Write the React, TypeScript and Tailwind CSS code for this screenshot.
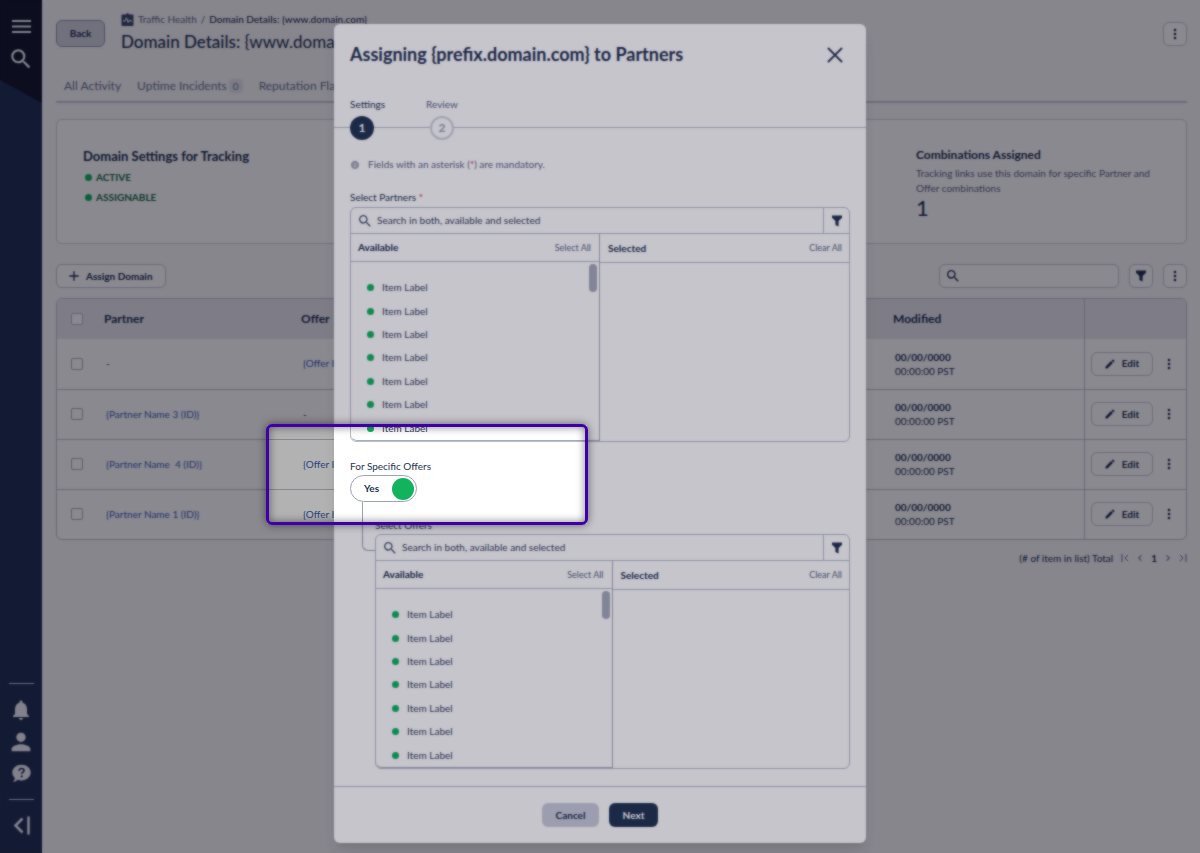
import type { ReactNode } from 'react';
import { MdAdd, MdChevronLeft, MdChevronRight, MdEdit, MdInfo, MdMoreVert, MdNotifications, MdPerson, MdSearch } from 'react-icons/md';

const rows = [
  { id: 1, partner: '', offer: '{Offer ID}' },
  { id: 2, partner: '{Partner Name 3 (ID)}', offer: '' },
  { id: 3, partner: '{Partner Name\u00a0 4 (ID)}', offer: '{Offer ID}' },
  { id: 4, partner: '{Partner Name 1 (ID)}', offer: '{Offer ID}' },
];

const items = [1, 2, 3, 4, 5, 6, 7];

function FilterIcon({ className = 'size-3' }: { className?: string }) {
  return (
    <svg className={className} viewBox="0 0 12 12" fill="currentColor" aria-hidden="true">
      <path d="M1 .5h10v2.200L7.600 6v5.500L4.400 10V6L1 2.700z" />
    </svg>
  );
}

function PulseIcon() {
  return (
    <svg className="size-[13px]" viewBox="0 0 13 13" aria-hidden="true">
      <path d="M1.500 1.500h3L6.500 0l2 1.500h3c.6 0 1 .4 1 1v9.500c0 .6-.4 1-1 1h-10c-.6 0-1-.4-1-1V2.500c0-.6.4-1 1-1z" fill="#3c4a6c" />
      <path d="M2 8h2l1.500-3.200L7.200 9.500l1.300-2.700.7 1.200H11" fill="none" stroke="#fff" strokeWidth="1" />
    </svg>
  );
}

function HelpIcon() {
  return (
    <svg className="size-[19px]" viewBox="0 0 19 19" aria-hidden="true">
      <path d="M9.500.8c5.200 0 9.200 3.500 9.200 7.800s-4 7.800-9.200 7.800c-1.400 0-2.700-.2-3.900-.7-1.300 1.300-3 2.100-4.600 2.100 1-.9 1.700-2.300 1.900-3.800C1.200 12.500.3 10.600.3 8.600.3 4.300 4.300.8 9.500.8z" fill="currentColor" />
      <path d="M7.100 6.700c.1-1.500 1.100-2.200 2.500-2.200s2.400.8 2.400 2c0 1.700-2.300 1.700-2.300 3.500" fill="none" stroke="#233253" strokeWidth="1.700" />
      <circle cx="9.700" cy="12.400" r="1.100" fill="#233253" />
    </svg>
  );
}

function CloseIcon() {
  return (
    <svg className="size-4" viewBox="0 0 16 16" fill="none" stroke="currentColor" strokeWidth="2" strokeLinecap="round" aria-hidden="true">
      <path d="M1.500 1.500l13 13M14.500 1.500l-13 13" />
    </svg>
  );
}

function Sidebar() {
  return (
    <nav className="relative flex w-[42px] shrink-0 flex-col items-center justify-between bg-[#233253] text-[#f2f2f6]">
      <svg className="absolute top-0 left-0 h-[103px] w-full" viewBox="0 0 42 103" preserveAspectRatio="none" aria-hidden="true">
        <path d="M0 0h42v103L0 80z" fill="#14182d" />
      </svg>
      <div className="relative flex flex-col items-center gap-3 pt-5">
        <button type="button" aria-label="Menu">
          <svg className="h-[14px] w-[19px]" viewBox="0 0 19 14" fill="currentColor" aria-hidden="true">
            <path d="M0 0h19v2H0zM0 5.500h19v2H0zM0 11h19v2H0z" />
          </svg>
        </button>
        <button type="button" aria-label="Search">
          <MdSearch className="size-[26px]" />
        </button>
      </div>
      <div className="flex w-[25px] flex-col items-center pb-[18px]">
        <div className="h-px w-full bg-[#c4c9d6]" />
        <button type="button" aria-label="Notifications" className="mt-[14px]">
          <MdNotifications className="size-6" />
        </button>
        <button type="button" aria-label="Account" className="mt-[6px]">
          <MdPerson className="size-7" />
        </button>
        <button type="button" aria-label="Help" className="mt-2">
          <HelpIcon />
        </button>
        <div className="mt-4 h-px w-full bg-[#c4c9d6]" />
        <button type="button" aria-label="Collapse" className="mt-4">
          <svg className="size-[19px]" viewBox="0 0 19 19" fill="none" stroke="currentColor" aria-hidden="true">
            <path d="M10.500 2.500L3.500 9.500l7 7" strokeWidth="2.500" />
            <path d="M16.500 .5v18" strokeWidth="2.500" />
          </svg>
        </button>
      </div>
    </nav>
  );
}

function IconButton({ label, children }: { label: string; children: ReactNode }) {
  return (
    <button type="button" aria-label={label} className="flex size-6 items-center justify-center rounded-md border border-[#c6c8d3] bg-white">
      {children}
    </button>
  );
}

function DomainPage() {
  return (
    <main className="min-w-0 flex-1 pr-[13px] pl-[14px]">
      <header className="flex h-16 items-start justify-between">
        <div className="flex gap-4">
          <button type="button" className="mt-5 h-[27px] w-[49px] rounded-md border border-[#8e96b0] bg-[#d0d2dd] text-[10px] font-bold">
            Back
          </button>
          <div className="pt-3">
            <div className="flex h-[14px] items-center gap-1 text-[10px]">
              <PulseIcon />
              <a href="#health" className="text-[#5c6685]">Traffic Health</a>
              <span className="text-[#5c6685]">/</span>
              <span className="font-medium">Domain Details: {'{www.domain.com}'}</span>
            </div>
            <h1 className="mt-1 text-[17px] leading-6 font-medium">Domain Details: <span className="font-normal">{'{www.domain.com}'}</span></h1>
          </div>
        </div>
        <div className="pt-[22px]">
          <IconButton label="More"><MdMoreVert className="size-4" /></IconButton>
        </div>
      </header>

      <div className="flex h-[39px] items-center gap-4 border-b-2 border-[#c9cbd8] px-2 pt-[6px] text-[12px] text-[#6b7491]">
        <button type="button">All Activity</button>
        <button type="button" className="flex items-center gap-[2px]">
          Uptime Incidents
          <span className="rounded-sm bg-[#e6e7ee] px-1 text-[10px] leading-[14px]">0</span>
        </button>
        <button type="button">Reputation Flags</button>
      </div>

      <section className="mt-4 flex h-[125px] justify-between rounded-md border border-[#cfd1da] bg-white pl-[26px]">
        <div className="pt-[27px]">
          <h2 className="text-[13px] leading-[18px] font-bold">Domain Settings for Tracking</h2>
          {['ACTIVE', 'ASSIGNABLE'].map((status) => (
            <p key={status} className="mt-1 flex h-4 items-center gap-1 pl-[2px] text-[10px] font-bold text-[#1c6b45]">
              <span className="size-[7px] rounded-full bg-[#12b35d]" />
              {status}
            </p>
          ))}
        </div>
        <div className="w-[270px] pt-[27px] pr-[30px]">
          <h2 className="text-[12px] leading-4 font-bold">Combinations Assigned</h2>
          <p className="mt-[3px] text-[10px] leading-[15px] text-[#5c6685]">
            Tracking links use this domain for specific Partner and Offer combinations
          </p>
          <p className="text-[22px] leading-6">1</p>
        </div>
      </section>

      <div className="mt-5 flex h-6 items-center justify-between">
        <button type="button" className="flex h-6 w-[110px] items-center gap-1 rounded-md border border-[#c6c8d3] bg-white px-[9px] text-[10px] font-bold whitespace-nowrap">
          <MdAdd className="size-4 shrink-0" />
          Assign Domain
        </button>
        <div className="flex gap-[10px]">
          <label className="flex h-6 w-[180px] items-center rounded-md border border-[#c6c8d3] bg-white px-[5px]">
            <MdSearch className="size-4" />
            <input type="search" aria-label="Search domains" className="min-w-0 flex-1 outline-none" />
          </label>
          <IconButton label="Filter"><FilterIcon /></IconButton>
          <IconButton label="More options"><MdMoreVert className="size-4" /></IconButton>
        </div>
      </div>

      <div className="mt-[10px] overflow-hidden rounded-md border border-[#c0c2ce] bg-white">
        <table className="w-full table-fixed text-left">
          <thead>
            <tr className="h-10 bg-[#e8e9ee] text-[12px]">
              <th className="w-[47px] pl-[14px]"><input type="checkbox" aria-label="Select all" className="block size-3 appearance-none rounded-[2px] border border-[#b5b8c6] bg-white" /></th>
              <th className="w-[197px]">Partner</th>
              <th>Offer</th>
              <th className="w-[191px]">Modified</th>
              <th aria-label="Actions" className="w-[102px] border-l border-[#c0c2ce]" />
            </tr>
          </thead>
          <tbody className="text-[10px]">
            {rows.map((row) => (
              <tr key={row.id} className="h-[50px] border-b border-[#c0c2ce] last:border-b-0">
                <td className="pl-[14px]"><input type="checkbox" aria-label={`Select row ${row.id}`} className="block size-3 appearance-none rounded-[2px] border border-[#a9acba] bg-white" /></td>
                <td className="pl-[2px]">{row.partner ? <a href="#partner" className="text-[#3d62b8]">{row.partner}</a> : '-'}</td>
                <td className="pl-[2px]">{row.offer ? <a href="#offer" className="text-[#3d62b8]">{row.offer}</a> : '-'}</td>
                <td className="pl-[2px] leading-[14px]">
                  <div className="font-bold">00/00/0000</div>
                  <div>00:00:00 PST</div>
                </td>
                <td className="border-l border-[#c0c2ce] pl-[6px]">
                  <div className="flex items-center gap-2">
                    <button type="button" className="flex h-6 w-[62px] items-center justify-center gap-[6px] rounded-md border border-[#c6c8d3] font-bold">
                      <MdEdit className="size-3" />
                      Edit
                    </button>
                    <button type="button" aria-label="Row options"><MdMoreVert className="size-4" /></button>
                  </div>
                </td>
              </tr>
            ))}
          </tbody>
        </table>
      </div>

      <div className="mt-2 flex h-5 items-center justify-end gap-2 text-[10px]">
        <span>(# of item in list) Total</span>
        <div className="flex items-center gap-[5px]">
          <button type="button" aria-label="First page" className="text-[#6b7491]">
            <svg className="size-2" viewBox="0 0 8 8" fill="none" stroke="currentColor" aria-hidden="true"><path d="M1 0v8M7 1L4 4l3 3" /></svg>
          </button>
          <button type="button" aria-label="Previous page" className="text-[#6b7491]"><MdChevronLeft className="size-3" /></button>
          <span className="font-bold">1</span>
          <button type="button" aria-label="Next page" className="text-[#6b7491]"><MdChevronRight className="size-3" /></button>
          <button type="button" aria-label="Last page" className="text-[#6b7491]">
            <svg className="size-2" viewBox="0 0 8 8" fill="none" stroke="currentColor" aria-hidden="true"><path d="M7 0v8M1 1l3 3-3 3" /></svg>
          </button>
        </div>
      </div>
    </main>
  );
}

function TransferList({ label }: { label: string }) {
  return (
    <div className="flex flex-col rounded-md border border-[#b9bccb]">
      <div className="flex h-[26px] items-center border-b border-[#b9bccb]">
        <MdSearch className="ml-[6px] size-4 text-[#4a5674]" />
        <input
          type="text"
          aria-label={label}
          placeholder="Search in both, available and selected"
          className="ml-1 min-w-0 flex-1 text-[10px] outline-none placeholder:text-[#35415f] placeholder:opacity-100"
        />
        <button type="button" aria-label="Filter list" className="flex h-full w-[26px] items-center justify-center border-l border-[#b9bccb]">
          <FilterIcon />
        </button>
      </div>
      <div className="grid grid-cols-2">
        <div className="rounded-bl-md border-r border-b border-[#a9adc1]">
          <div className="flex h-[28px] items-center justify-between border-b border-[#b9bccb] pr-2 pl-[7px] text-[10px]">
            <h3 className="font-bold">Available</h3>
            <button type="button" className="text-[9px] text-[#5c6685]">Select All</button>
          </div>
          <div className="flex justify-between">
            <ul className="mt-[14px] grid h-[164px] grid-rows-7 pl-4 text-[10px] text-[#35415f]">
              {items.map((item) => (
                <li key={item} className="flex items-center gap-2">
                  <span className="size-[7px] rounded-full bg-[#12b35d]" />
                  Item Label
                </li>
              ))}
            </ul>
            <div className="mt-[2px] mr-[2px] h-7 w-2 rounded-full bg-[#a7abbc]" />
          </div>
        </div>
        <div>
          <div className="flex h-[29px] items-center justify-between border-b border-[#b9bccb] pr-[7px] pl-2 text-[10px]">
            <h3 className="font-bold">Selected</h3>
            <button type="button" className="text-[9px] text-[#5c6685]">Clear All</button>
          </div>
        </div>
      </div>
    </div>
  );
}

function AssignModal() {
  return (
    <div role="dialog" aria-label="Assign to partners" className="mt-6 mb-[10px] w-full max-w-[532px] rounded-md bg-white shadow-lg">
      <div className="flex h-[61px] items-center justify-between pr-[23px] pl-4">
        <h2 className="text-[18px] font-bold">Assigning {'{prefix.domain.com}'} to Partners</h2>
        <button type="button" aria-label="Close" className="text-[#35415f]">
          <CloseIcon />
        </button>
      </div>

      <ol className="relative mt-3 flex gap-[41px] px-4 text-[10px]">
        <li className="absolute inset-x-0 bottom-3 h-px bg-[#b9bccb]" aria-hidden="true" />
        <li className="relative flex flex-col gap-[5px]">
          <span className="leading-[14px]">Settings</span>
          <span className="flex size-6 items-center justify-center rounded-full bg-[#223553] text-[12px] font-bold text-white">1</span>
        </li>
        <li className="relative flex flex-col items-center gap-[5px] text-[#5c6685]">
          <span className="leading-[14px]">Review</span>
          <span className="flex size-6 items-center justify-center rounded-full border-2 border-[#d0d2dc] bg-white text-[12px] font-bold text-[#9aa0b5]">2</span>
        </li>
      </ol>

      <div className="px-4">
        <p className="mt-4 flex h-[17px] items-center gap-2 text-[10px] text-[#5c6685]">
          <MdInfo className="size-[10px] text-[#a7abbc]" />
          <span>Fields with an asterisk (<span className="text-[#e5173f]">*</span>) are mandatory.</span>
        </p>
        <div className="mt-[17px]">
          <p className="h-[17px] text-[10px] leading-[14px]">Select Partners <span className="text-[#e5173f]">*</span></p>
          <TransferList label="Select Partners" />
        </div>

        <label className="mt-4 block w-fit text-[10px]">
          <span className="block leading-4">For Specific Offers</span>
          <span className="relative mt-px flex h-[27px] w-[67px] items-center justify-between rounded-full border border-[#9ca3b8] pr-[2px] pl-[13px] font-bold">
            <input type="checkbox" role="switch" defaultChecked className="sr-only" />
            Yes
            <span className="size-[22px] rounded-full bg-[#12b35d]" />
          </span>
        </label>
        <div className="flex">
          <div className="ml-3 h-[49px] w-[13px] shrink-0 rounded-bl-md border-b border-l border-[#9ca3b8]" />
          <div className="min-w-0 flex-1 pt-4">
            <p className="h-4 text-[10px] leading-[14px]">Select Offers</p>
            <TransferList label="Select Offers" />
          </div>
        </div>
      </div>

      <footer className="mt-[17px] flex justify-center gap-[10px] border-t border-[#b9bccb] py-4 text-[10px] font-bold">
        <button type="button" className="h-6 w-[57px] rounded-md bg-[#c9ccda]">Cancel</button>
        <button type="button" className="h-6 w-[49px] rounded-md bg-[#223553] text-white">Next</button>
      </footer>
    </div>
  );
}

export default function App() {
  return (
    <div className="relative flex min-h-screen bg-[#f8f8f9] font-['Lato','Open_Sans',sans-serif] text-[#233253]">
      <Sidebar />
      <DomainPage />
      <div className="absolute inset-0 flex items-start justify-center bg-black/30">
        <AssignModal />
      </div>
      {/* Softens, then dims, everything around the spotlight */}
      <div className="pointer-events-none absolute inset-0 opacity-60 backdrop-blur-[1px] [clip-path:polygon(evenodd,0_0,100%_0,100%_100%,0_100%,0_0,calc(50%_-_333px)_425px,calc(50%_-_13px)_425px,calc(50%_-_13px)_524px,calc(50%_-_333px)_524px,calc(50%_-_333px)_425px)]" />
      <div className="pointer-events-none absolute inset-0 bg-[#080423]/23 [clip-path:polygon(evenodd,0_0,100%_0,100%_100%,0_100%,0_0,calc(50%_-_333px)_425px,calc(50%_-_13px)_425px,calc(50%_-_13px)_524px,calc(50%_-_333px)_524px,calc(50%_-_333px)_425px)]" />
      <div className="pointer-events-none absolute top-[424px] left-1/2 -ml-[334px] h-[101px] w-[322px] rounded-md border-[3px] border-[#3f00ac] shadow-[0_0_8px_rgba(0,0,0,0.5),inset_0_0_8px_rgba(0,0,0,0.5)]" />
    </div>
  );
}
